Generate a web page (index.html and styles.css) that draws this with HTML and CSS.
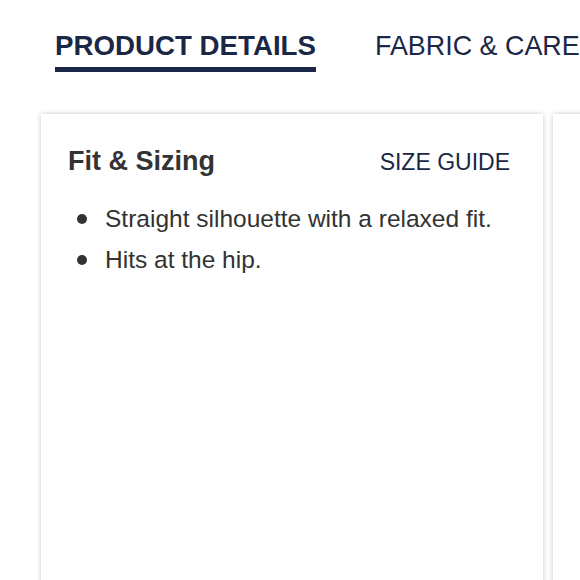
FILE: index.html
```html
<!DOCTYPE html>
<html>
<head>
<meta charset="utf-8">
<link rel="stylesheet" href="styles.css">
</head>
<body>
<nav class="tabs">
  <div class="tab tab-active">PRODUCT DETAILS</div>
  <div class="tab">FABRIC &amp; CARE</div>
</nav>
<section class="cards">
  <article class="card">
    <header class="card-head">
      <h2 class="card-title">Fit &amp; Sizing</h2>
      <a class="card-link">SIZE GUIDE</a>
    </header>
    <ul class="bullets">
      <li>Straight silhouette with a relaxed fit.</li>
      <li>Hits at the hip.</li>
    </ul>
  </article>
  <article class="card"></article>
</section>
</body>
</html>
```
FILE: styles.css
```css
html, body {
  margin: 0;
  padding: 0;
  background: #fff;
  overflow: hidden;
  height: 580px;
}
body {
  font-family: "Liberation Sans", Arial, sans-serif;
}
.tabs {
  display: flex;
  align-items: baseline;
  gap: 59px;
  padding: 30px 0 0 55px;
  white-space: nowrap;
  overflow: hidden;
}
.tab {
  font-size: 26.9px;
  line-height: 31px;
  color: #1b2746;
  padding-bottom: 6px;
  border-bottom: 5px solid transparent;
}
.tab-active {
  font-weight: bold;
  font-size: 27.7px;
  border-bottom-color: #1b2746;
}
.cards {
  display: flex;
  gap: 10px;
  padding: 41px 0 0 41px;
  height: 467px;
  overflow: hidden;
}
.card {
  flex: 0 0 502px;
  height: 480px;
  box-sizing: border-box;
  background: #fff;
  box-shadow: 0 0 5px rgba(0, 0, 0, 0.22);
  padding: 32px 33px 0 27px;
}
.card-head {
  display: flex;
  justify-content: space-between;
  align-items: baseline;
}
.card-title {
  margin: 0;
  font-size: 27px;
  line-height: 31px;
  font-weight: bold;
  color: #333;
}
.card-link {
  font-size: 23px;
  line-height: 31px;
  color: #1b2746;
}
.bullets {
  list-style: none;
  margin: 20px 0 0 9px;
  padding: 0;
}
.bullets li {
  display: flex;
  align-items: center;
  gap: 18px;
  font-size: 24.5px;
  line-height: 41px;
  color: #333;
}
.bullets li::before {
  content: "";
  flex: 0 0 10px;
  height: 10px;
  border-radius: 50%;
  background: #333;
}
```
